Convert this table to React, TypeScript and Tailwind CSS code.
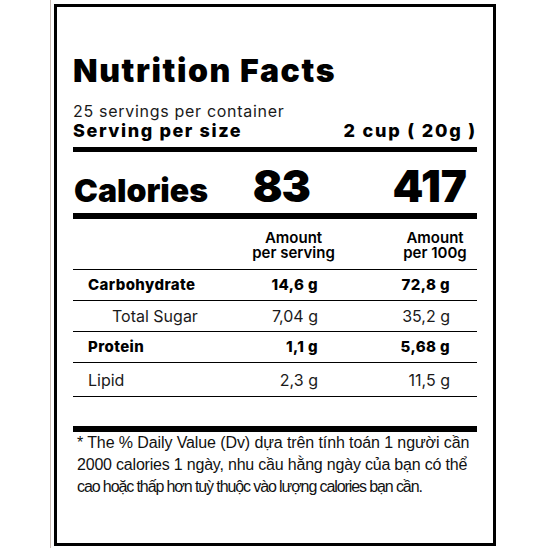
const rows = [
  { label: "Carbohydrate", serving: "14,6 g", per100: "72,8 g", bold: true, indent: false, h: "h-[31px]" },
  { label: "Total Sugar", serving: "7,04 g", per100: "35,2 g", bold: false, indent: true, h: "h-[31px]" },
  { label: "Protein", serving: "1,1 g", per100: "5,68 g", bold: true, indent: false, h: "h-[31px]" },
  { label: "Lipid", serving: "2,3 g", per100: "11,5 g", bold: false, indent: false, h: "h-[34px]" },
];

function NutritionRow({ row }: { row: (typeof rows)[number] }) {
  const weight = row.bold
    ? "font-extrabold text-[15px] tracking-[0.4px]"
    : "font-normal text-[16px] text-[#1a1a1a]";
  return (
    <div className={`grid grid-cols-[1fr_120px_132px] items-center border-b-[1.5px] border-black pl-[15px] pr-[27px] ${row.h}`}>
      <span className={`${weight} ${row.indent ? "pl-[24px]" : ""}`}>{row.label}</span>
      <span className={`${weight} text-right`}>{row.serving}</span>
      <span className={`${weight} text-right`}>{row.per100}</span>
    </div>
  );
}

export default function App() {
  return (
    <div className="flex h-[548px] w-[548px] bg-white pl-[50px] font-['Inter',sans-serif] text-black">
      <div className="border-l border-[#cbbdb5] pl-[3px] pt-[4px]">
        <div className="h-[542px] w-[442px] border-[3px] border-black px-[16px]">
          <h1 className="pt-[48px] text-[32px] font-black leading-[32px] tracking-[1.6px]">Nutrition Facts</h1>

          <p className="mt-[14px] text-[16px] leading-[20px] tracking-[0.7px] text-[#1a1a1a]">25 servings per container</p>
          <div className="flex justify-between text-[18px] font-extrabold leading-[20px] tracking-[1.6px]">
            <span>Serving per size</span>
            <span className="tracking-[1.8px]">2 cup ( 20g )</span>
          </div>

          <div className="mt-[6px] h-[5px] bg-black" />

          <div className="mt-[12px] flex items-baseline pr-[10px] leading-[44px]">
            <span className="flex-1 pl-[1px] text-[32px] font-black">Calories</span>
            <span className="w-[100px] text-right text-[44px] font-black tracking-[-1px]">83</span>
            <span className="w-[157px] text-right text-[44px] font-black">417</span>
          </div>

          <div className="h-[6px] bg-black" />

          <div className="flex pb-[9px] pt-[11px] text-[15px] font-semibold leading-[15px]">
            <div className="ml-[170px] w-[101px] text-center">
              Amount
              <br />
              per serving
            </div>
            <div className="ml-[49px] w-[84px] text-center">
              Amount
              <br />
              per 100g
            </div>
          </div>

          <div className="border-t-[1.5px] border-black">
            {rows.map((row) => (
              <NutritionRow key={row.label} row={row} />
            ))}
          </div>

          <div className="mt-[29px] h-[6px] bg-black" />

          <p className="whitespace-nowrap pl-[4px] font-['Liberation_Sans',Arial,sans-serif] text-[16px] leading-[22px] text-[#111]">
            <span className="tracking-[-0.1px]">* The % Daily Value (Dv) dựa trên tính toán 1 người cần</span>
            <br />
            <span className="tracking-[-0.2px]">2000 calories 1 ngày, nhu cầu hằng ngày của bạn có thể</span>
            <br />
            <span className="tracking-[-1.1px]">cao hoặc thấp hơn tuỳ thuộc vào lượng calories bạn cần.</span>
          </p>
        </div>
      </div>
    </div>
  );
}
